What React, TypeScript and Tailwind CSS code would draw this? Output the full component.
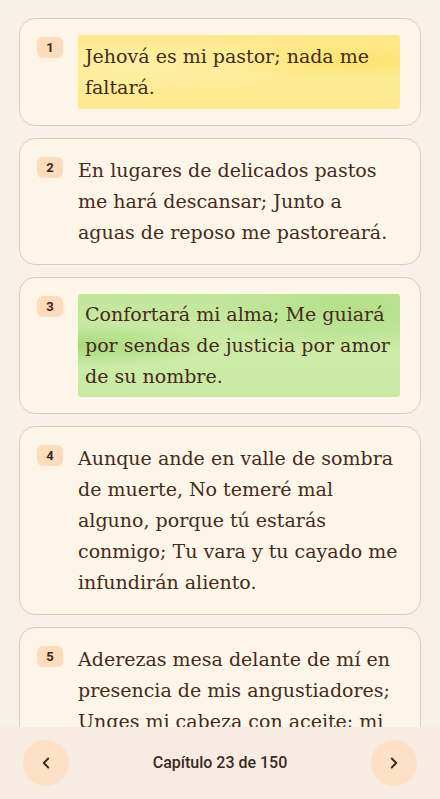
import { ChevronLeft, ChevronRight } from 'lucide-react';

type Verse = {
  n: number;
  text: string;
  mark?: 'yellow' | 'green';
};

const verses: Verse[] = [
  { n: 1, text: 'Jehová es mi pastor; nada me faltará.', mark: 'yellow' },
  { n: 2, text: 'En lugares de delicados pastos me hará descansar; Junto a aguas de reposo me pastoreará.' },
  { n: 3, text: 'Confortará mi alma; Me guiará por sendas de justicia por amor de su nombre.', mark: 'green' },
  {
    n: 4,
    text: 'Aunque ande en valle de sombra de muerte, No temeré mal alguno, porque tú estarás conmigo; Tu vara y tu cayado me infundirán aliento.',
  },
  {
    n: 5,
    text: 'Aderezas mesa delante de mí en presencia de mis angustiadores; Unges mi cabeza con aceite; mi copa está rebosando.',
  },
  {
    n: 6,
    text: 'Ciertamente el bien y la misericordia me seguirán todos los días de mi vida, Y en la casa de Jehová moraré por largos días.',
  },
];

function VerseCard({ verse }: { verse: Verse }) {
  const body =
    verse.mark === 'yellow' ? (
      <p className="mr-[3px] rounded-[3px] px-[7px] py-[6px] bg-[radial-gradient(ellipse_at_20%_40%,#fdf0a4_0%,transparent_45%),radial-gradient(ellipse_at_88%_35%,#fce472_0%,transparent_35%),linear-gradient(180deg,#fde88a,#fdec96_60%,#fde98c)]">
        {verse.text}
      </p>
    ) : verse.mark === 'green' ? (
      <p className="mr-[3px] rounded-[3px] px-[7px] py-[5px] bg-[radial-gradient(ellipse_at_0%_50%,#a6da78_0%,transparent_30%),radial-gradient(ellipse_at_85%_15%,#b2e087_0%,transparent_35%),linear-gradient(180deg,#c0e69b,#cdeba9_55%,#c8e9a3)]">
        {verse.text}
      </p>
    ) : (
      <p>{verse.text}</p>
    );

  return (
    <div className="flex gap-[15px] rounded-2xl border border-[#d9cdbf] bg-[#fdf6e8] px-[17px] py-[16px]">
      <span className="mt-[2px] flex h-[21px] w-[26px] shrink-0 items-center justify-center rounded-md bg-[#fcdcbd] font-['Roboto',sans-serif] text-[13px] font-bold text-[#3d2817]">
        {verse.n}
      </span>
      <div className="flex-1 font-['DejaVu_Serif','Liberation_Serif',serif] text-[19px] leading-[31px] text-[#452b1b]">
        {body}
      </div>
    </div>
  );
}

export default function App() {
  return (
    <div className="relative h-[799px] w-full overflow-hidden bg-[#f8f1e7]">
      <div className="flex flex-col gap-3 px-[19px] pt-[18px]">
        {verses.map(v => (
          <VerseCard key={v.n} verse={v} />
        ))}
      </div>

      <div className="absolute inset-x-0 bottom-0 flex h-[72px] items-center justify-between bg-[#f8ebe2] px-[23px]">
        <button className="flex h-[46px] w-[46px] items-center justify-center rounded-full bg-[#fde0c5] text-[#3d2817]">
          <ChevronLeft size={18} strokeWidth={2.5} />
        </button>
        <span className="font-['Roboto',sans-serif] text-[16px] font-medium text-[#3b2a1e]">
          Capítulo 23 de 150
        </span>
        <button className="flex h-[46px] w-[46px] items-center justify-center rounded-full bg-[#fde0c5] text-[#3d2817]">
          <ChevronRight size={18} strokeWidth={2.5} />
        </button>
      </div>
    </div>
  );
}
